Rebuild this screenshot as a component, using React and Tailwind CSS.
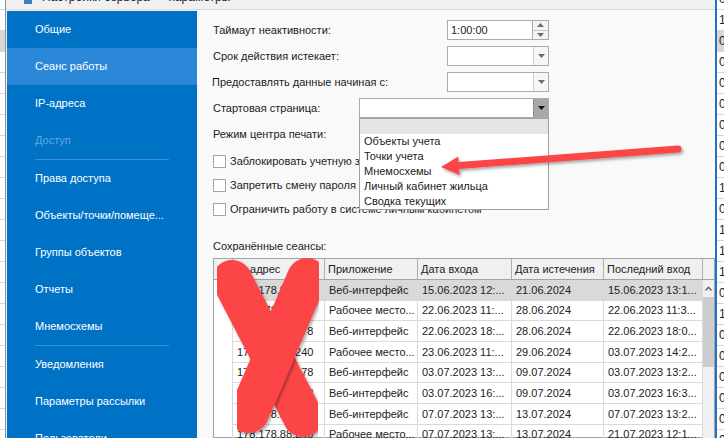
import React from 'react'

const NAV = [
  { label: 'Общие' },
  { label: 'Сеанс работы', active: true },
  { label: 'IP-адреса' },
  { label: 'Доступ', header: true },
  { sep: true },
  { label: 'Права доступа' },
  { label: 'Объекты/точки/помеще...' },
  { label: 'Группы объектов' },
  { label: 'Отчеты' },
  { label: 'Мнемосхемы' },
  { sep: true },
  { label: 'Уведомления' },
  { label: 'Параметры рассылки' },
  { label: 'Пользователи' },
]

const COLS = [
  { w: 'w-[19px]', title: '' },
  { w: 'w-[92px]', title: 'IP-адрес' },
  { w: 'w-[93px]', title: 'Приложение' },
  { w: 'w-[94px]', title: 'Дата входа' },
  { w: 'w-[92px]', title: 'Дата истечения' },
  { w: 'w-[99px]', title: 'Последний вход' },
]

const SESSIONS = [
  ['178.178.88.178', 'Веб-интерфейс', '15.06.2023 12:...', '21.06.2024', '15.06.2023 13:1...'],
  ['178.178.88.240', 'Рабочее место...', '22.06.2023 11:...', '28.06.2024', '22.06.2023 11:3...'],
  ['178.178.88.178', 'Веб-интерфейс', '22.06.2023 18:...', '28.06.2024', '22.06.2023 18:0...'],
  ['178.178.88.240', 'Рабочее место...', '23.06.2023 11:...', '29.06.2024', '03.07.2023 14:2...'],
  ['178.178.88.178', 'Веб-интерфейс', '03.07.2023 13:...', '09.07.2024', '03.07.2023 13:2...'],
  ['178.178.88.178', 'Веб-интерфейс', '03.07.2023 16:...', '09.07.2024', '03.07.2023 16:3...'],
  ['178.178.88.178', 'Веб-интерфейс', '07.07.2023 13:...', '13.07.2024', '07.07.2023 13:2...'],
  ['178.178.88.240', 'Рабочее место...', '07.07.2023 13:...', '13.07.2024', '21.07.2023 12:1...'],
]

const START_PAGES = ['Объекты учета', 'Точки учета', 'Мнемосхемы', 'Личный кабинет жильца', 'Сводка текущих']

// digits of the window behind the dialog
const BACK = ['0', '1', '0', '0', '0', '0', '0', '0', '0', '1', '0', '1', '1', '1', '0', '1', '0', '0', '0', '0', '0', '0']

function Tri({ up, dark }) {
  return (
    <svg width="7" height="4" viewBox="0 0 7 4">
      <polygon
        points={up ? '0,4 7,4 3.5,0' : '0,0 7,0 3.5,4'}
        fill={dark ? '#111' : '#6b6b6b'}
      />
    </svg>
  )
}

function BackGrid({ width, digits }) {
  return (
    <div className={`flex shrink-0 flex-col overflow-hidden bg-white ${width}`}>
      <div className="-mt-[11px] flex flex-col">
        {BACK.map((d, i) => (
          <div
            key={i}
            className={`flex h-[21px] shrink-0 items-center border-b border-[#d6d6d6] pl-[2px] text-[12px] text-[#222] ${
              i === 2 ? 'bg-[#d7d7d7]' : ''
            }`}
          >
            {digits ? d : ''}
          </div>
        ))}
      </div>
    </div>
  )
}

function Sidebar() {
  return (
    <div className="mt-px flex w-[190px] shrink-0 flex-col bg-[#0072c6]">
      {NAV.map((item, i) =>
        item.sep ? (
          <div key={i} className="mx-[28px] h-px shrink-0 bg-[#3a8dd3]" />
        ) : (
          <div
            key={i}
            className={`flex h-[37px] shrink-0 items-center pl-[28px] ${
              item.active ? 'bg-[#2b88d8]' : ''
            } ${item.header ? 'text-[#62a6df]' : 'text-white'}`}
          >
            {item.label}
          </div>
        )
      )}
    </div>
  )
}

function Combo({ width, pressed, children }) {
  return (
    <div className={`relative flex h-[20px] shrink-0 border border-[#ababab] bg-white ${width}`}>
      <div className="flex-1" />
      <div
        className={`flex w-[15px] items-center justify-center border-l ${
          pressed ? 'border-[#8e8e8e] bg-[#a8a8a8]' : 'border-[#d0d0d0] bg-[#f6f6f6]'
        }`}
      >
        <Tri dark={pressed} />
      </div>
      {children}
    </div>
  )
}

function CheckRow({ label }) {
  return (
    <div className="flex h-[24px] items-center gap-[4px]">
      <div className="h-[13px] w-[13px] shrink-0 border border-[#a5a5a5] bg-white" />
      <span className="whitespace-nowrap">{label}</span>
    </div>
  )
}

function SessionsTable() {
  return (
    <div className="flex w-[502px] flex-1 flex-col border border-[#a3a3a3] bg-white">
      <div className="flex h-[21px] shrink-0 border-b border-[#a3a3a3] bg-[#f0f0f0]">
        {COLS.map((c, i) => (
          <div
            key={i}
            className={`flex shrink-0 items-center whitespace-nowrap border-r border-[#b0b0b0] pl-[3px] ${c.w}`}
          >
            {c.title}
          </div>
        ))}
        <div className="flex-1" />
      </div>
      <div className="flex flex-1">
        <div className="flex w-[489px] flex-col">
          {SESSIONS.map((row, r) => (
            <div key={r} className="flex h-[20.67px] shrink-0">
              <div className="w-[19px] shrink-0 border-r border-[#dadada]" />
              {row.map((cell, c) => (
                <div
                  key={c}
                  className={`flex shrink-0 items-center overflow-hidden whitespace-nowrap border-b border-r border-[#dadada] pl-[4px] ${
                    COLS[c + 1].w
                  } ${r === 0 ? 'bg-[#d9d9d9]' : ''}`}
                >
                  {cell}
                </div>
              ))}
            </div>
          ))}
        </div>
        <div className="flex w-[11px] flex-col bg-[#f0f0f0]">
          <div className="flex h-[17px] items-center justify-center">
            <svg width="7" height="5" viewBox="0 0 7 5">
              <polyline points="0.5,4.5 3.5,1.2 6.5,4.5" fill="none" stroke="#5f5f5f" strokeWidth="1.3" />
            </svg>
          </div>
          <div className="h-[70px] bg-[#cdcdcd]" />
        </div>
      </div>
    </div>
  )
}

function Annotations() {
  return (
    <svg className="pointer-events-none absolute inset-0 z-20" width="724" height="438" viewBox="0 0 724 438">
      <defs>
        <filter id="sh" x="-20%" y="-20%" width="140%" height="140%">
          <feDropShadow dx="1.5" dy="2" stdDeviation="1.6" floodColor="#000" floodOpacity="0.35" />
        </filter>
      </defs>
      <g filter="url(#sh)">
        <line x1="232" y1="280" x2="303" y2="417" stroke="#fc4446" strokeWidth="40" strokeLinecap="round" />
      </g>
      <g filter="url(#sh)">
        <line x1="307" y1="278" x2="249" y2="413" stroke="#fc4446" strokeWidth="40" strokeLinecap="round" />
      </g>
      <g filter="url(#sh)">
        <line x1="678" y1="149" x2="456" y2="165.8" stroke="#fc4446" strokeWidth="7" strokeLinecap="round" />
        <polygon points="441,167 458.2,156.6 459.6,175" fill="#fc4446" />
      </g>
    </svg>
  )
}

export default function App() {
  return (
    <div className="relative flex h-[438px] w-[724px] overflow-hidden bg-white font-['Liberation_Sans',Arial,sans-serif] text-[11px] text-[#222]">
      <BackGrid width="w-[5px]" />
      <div className="flex w-[712px] shrink-0 flex-col border-l border-r-2 border-l-[#8d8d8d] border-r-[#1a74cc]">
        <div className="relative h-[10px] shrink-0 overflow-hidden border-b border-[#d9d9d9] bg-[#f0f0f0]">
          <div className="-mt-[12px] flex items-center gap-[10px] pl-[18px] text-[12px] text-[#222]">
            <div className="h-[13px] w-[8px] bg-[#3a7ec0]" />
            <span>Настройки сервера — параметры</span>
          </div>
        </div>
        <div className="flex min-h-0 flex-1 bg-[#f0f0f0] pl-px">
          <Sidebar />
          <div className="flex w-[518px] shrink-0 flex-col bg-[#f9f9f9] pl-[16px] pt-[10px]">
            <div className="flex h-[20px] shrink-0 items-center">
              <div className="w-[234px]">Таймаут неактивности:</div>
              <div className="flex h-[20px] w-[102px]">
                <div className="flex flex-1 items-center border border-[#ababab] bg-white pl-[3px]">1:00:00</div>
                <div className="flex w-[16px] flex-col border border-l-0 border-[#ababab] bg-[#f4f4f4]">
                  <div className="flex flex-1 items-center justify-center border-b border-[#c9c9c9]">
                    <Tri up />
                  </div>
                  <div className="flex flex-1 items-center justify-center">
                    <Tri />
                  </div>
                </div>
              </div>
            </div>
            <div className="mt-[6px] flex h-[20px] shrink-0 items-center">
              <div className="w-[234px]">Срок действия истекает:</div>
              <Combo width="w-[102px]" />
            </div>
            <div className="mt-[6px] flex h-[20px] shrink-0 items-center">
              <div className="-ml-px w-[235px]">Предоставлять данные начиная с:</div>
              <Combo width="w-[102px]" />
            </div>
            <div className="relative z-10 mt-[6px] flex h-[20px] shrink-0 items-center">
              <div className="w-[146px]">Стартовая страница:</div>
              <Combo width="w-[190px]" pressed>
                <div className="absolute left-[-1px] top-[19px] w-[190px] border border-[#a0a0a0] bg-white">
                  <div className="h-[15px] bg-[#e5e5e5]" />
                  {START_PAGES.map((p) => (
                    <div key={p} className="flex h-[15px] items-center pl-[4px]">
                      {p}
                    </div>
                  ))}
                </div>
              </Combo>
            </div>
            <div className="mt-[6px] flex h-[20px] shrink-0 items-center">Режим центра печати:</div>
            <div className="mt-[5px] flex shrink-0 flex-col">
              <CheckRow label="Заблокировать учетную запись" />
              <CheckRow label="Запретить смену пароля пользователем" />
              <CheckRow label="Ограничить работу в системе личным кабинетом" />
            </div>
            <div className="mt-[18px] flex h-[14px] shrink-0 items-center">Сохранённые сеансы:</div>
            <div className="mt-[5px] flex min-h-0 flex-1">
              <SessionsTable />
            </div>
          </div>
        </div>
      </div>
      <BackGrid width="w-[7px]" digits />
      <Annotations />
    </div>
  )
}
